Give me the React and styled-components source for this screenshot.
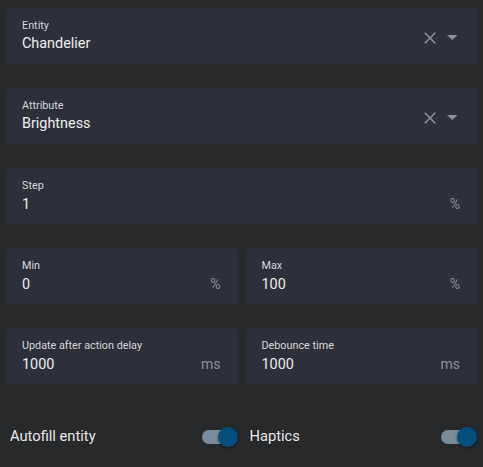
import React from 'react';
import styled, {createGlobalStyle} from 'styled-components';

const GlobalStyle = createGlobalStyle`
  html, body {
    margin: 0;
    padding: 0;
    background: #28292b;
    font-family: Roboto, "Noto Sans", sans-serif;
  }
`

function ClearIcon() {
  return (
    <svg width="12" height="12" viewBox="0 0 12 12">
      <path d="M0.8 0.8 L11.2 11.2 M11.2 0.8 L0.8 11.2" stroke="#8c8f98" strokeWidth="1.6" fill="none"/>
    </svg>
  );
}

function CaretIcon() {
  return (
    <svg width="10.5" height="5" viewBox="0 0 10.5 5">
      <path d="M0 0 L10.5 0 L5.25 5 Z" fill="#8c8f98"/>
    </svg>
  );
}

function Field({label, value, suffix, select}) {
  return (
    <FieldBox>
      <FieldContent>
        <Label>{label}</Label>
        <ValueRow>
          <Value>{value}</Value>
          {suffix && <Suffix>{suffix}</Suffix>}
        </ValueRow>
      </FieldContent>
      {select && (
        <Icons>
          <ClearIcon/>
          <CaretIcon/>
        </Icons>
      )}
    </FieldBox>
  );
}

function Toggle({label}) {
  return (
    <ToggleItem>
      <ToggleLabel>{label}</ToggleLabel>
      <Switch>
        <Track/>
        <Thumb/>
      </Switch>
    </ToggleItem>
  );
}

export default function App() {
  return (
    <Page>
      <GlobalStyle/>
      <Field label="Entity" value="Chandelier" select/>
      <Field label="Attribute" value="Brightness" select/>
      <Field label="Step" value="1" suffix="%"/>
      <Pair>
        <Field label="Min" value="0" suffix="%"/>
        <Field label="Max" value="100" suffix="%"/>
      </Pair>
      <Pair>
        <Field label="Update after action delay" value="1000" suffix="ms"/>
        <Field label="Debounce time" value="1000" suffix="ms"/>
      </Pair>
      <ToggleRow>
        <Toggle label="Autofill entity"/>
        <Toggle label="Haptics"/>
      </ToggleRow>
    </Page>
  );
}

const Page = styled.div`
  display: flex;
  flex-direction: column;
  gap: 24px;
  padding: 8px 6px 0 6px;
`

const Pair = styled.div`
  display: grid;
  grid-template-columns: 1fr 1fr;
  gap: 8px;
`

const FieldBox = styled.div`
  display: flex;
  flex-direction: row;
  height: 56px;
  box-sizing: border-box;
  background: #2e3039;
  border-radius: 4px 4px 0 0;
  padding: 0 16px 0 16px;
`

const FieldContent = styled.div`
  flex: 1;
  display: flex;
  flex-direction: column;
  padding-top: 11px;
`

const Label = styled.div`
  font-size: 10.8px;
  line-height: 14px;
  height: 14px;
  color: #d6d7da;
  white-space: nowrap;
`

const ValueRow = styled.div`
  display: flex;
  align-items: baseline;
  justify-content: space-between;
  margin-top: 2px;
`

const Value = styled.div`
  font-size: 14.4px;
  line-height: 18px;
  color: #eceef0;
`

const Suffix = styled.div`
  font-size: 14px;
  line-height: 18px;
  color: #8f9197;
  padding-right: 1px;
`

const Icons = styled.div`
  display: flex;
  align-items: center;
  gap: 10.5px;
  padding-top: 3px;
  margin-right: 4px;
`

const ToggleRow = styled.div`
  display: grid;
  grid-template-columns: 1fr 1fr;
  gap: 8px;
  height: 40px;
  margin-top: 8px;
`

const ToggleItem = styled.div`
  display: flex;
  align-items: center;
  justify-content: space-between;
  padding-left: 4px;
`

const ToggleLabel = styled.div`
  font-size: 14.7px;
  color: #e6e7e9;
`

const Switch = styled.div`
  position: relative;
  width: 36px;
  height: 20px;
  margin-top: 1px;
`

const Track = styled.div`
  position: absolute;
  left: 0;
  top: 3px;
  width: 32px;
  height: 14px;
  border-radius: 7px;
  background: #7a8c9a;
`

const Thumb = styled.div`
  position: absolute;
  right: 0;
  top: 0;
  width: 20px;
  height: 20px;
  border-radius: 50%;
  background: #024f80;
  box-shadow: 0 1px 3px rgba(0, 0, 0, 0.45);
`
